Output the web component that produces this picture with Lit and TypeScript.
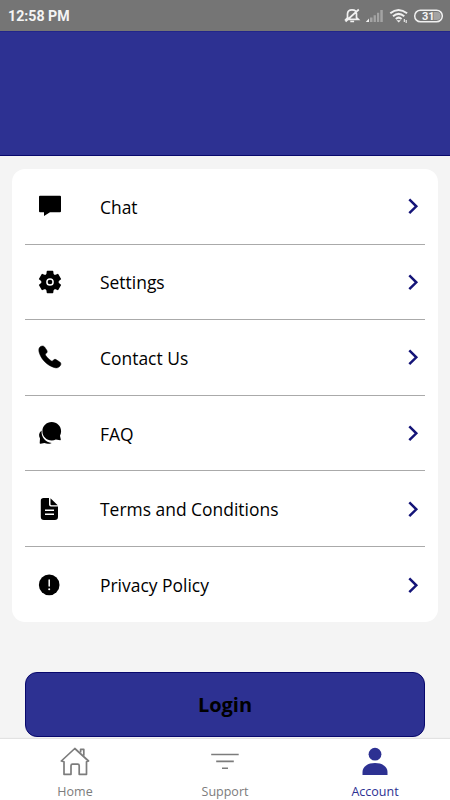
import { LitElement, html, css, svg } from "lit";
import { customElement } from "lit/decorators.js";

const gearTeeth = [0, 60, 120, 180, 240, 300];

const icons = {
  chat: svg`<path d="M2 1.700h20q1 0 1 1v14.500q0 1-1 1H12L6 22v-3.800H2q-1 0-1-1V2.700q0-1 1-1z"/>`,
  gear: svg`<circle cx="12" cy="12" r="8.700"/>
    ${gearTeeth.map((a) => svg`<path transform="rotate(${a} 12 12)" d="M8.700 1.500q0-.7.700-.7h5.200q.7 0 .7.700l.6 5H8.100z"/>`)}
    <circle cx="12" cy="12" r="3.100" fill="none" stroke="#fff" stroke-width="1.500"/>`,
  phone: svg`<path stroke="#000" stroke-width=".5" d="M2 1.900C3.500.8 5.500.6 6.600 2l2.200 3.200c.8 1.300.4 2.500-.8 3.400-.9.7-.8 1.100-.2 2 1.400 2.100 3 3.700 5.200 5.100.9.6 1.400.6 2-.2.900-1.200 2.200-1.500 3.400-.7l3.400 2.200c1.300.9 1.500 2.400.4 3.800-1.600 2.100-3.700 2.600-6.400 1.600C9 20 4 15.200 1.500 8.500.6 5.800.4 3.400 2 1.900z"/>`,
  bubbles: svg`<path d="M3.600 9.500C.8 11.600.4 14.500 2 17.600L1.700 22q0 .9.900.7l3.800-.6c2.700 1.100 5 1 7.300-.2C7.500 21.200 3 16.500 3.600 9.500z"/>
    <path d="M13.700 1C8.500 1 4.400 5 4.400 10.200s4.100 9.200 9.300 9.200c1.500 0 2.900-.3 4.100-.9l4.400.7q.7 0 .6-.8l-.8-3.700c.7-1.300 1.100-2.900 1.100-4.500C23.100 5 18.900 1 13.700 1z"/>`,
  doc: svg`<path d="M5.600 1H11v6.500q0 2 2 2h7v10.300q0 3.200-3.200 3.200H6q-3.200 0-3.200-3.200V3.800Q2.800 1 5.600 1z"/>
    <path d="M12.500 1.300 19.700 8.200H13.500q-1 0-1-1z"/>
    <path d="M7 13.300h9M7 17.200h9" stroke="#fff" stroke-width="1.400"/>`,
  alert: svg`<circle cx="11.200" cy="11.900" r="10.300"/>
    <path d="M11.200 6.900v6.200" stroke="#fff" stroke-width="1.500" stroke-linecap="round"/>
    <circle cx="11.200" cy="16.300" r="1" fill="#fff"/>`,
};

const items = [
  { icon: icons.chat, label: "Chat" },
  { icon: icons.gear, label: "Settings" },
  { icon: icons.phone, label: "Contact Us" },
  { icon: icons.bubbles, label: "FAQ" },
  { icon: icons.doc, label: "Terms and Conditions" },
  { icon: icons.alert, label: "Privacy Policy" },
];

@customElement("app-root")
export class AppRoot extends LitElement {
  static styles = css`
    :host {
      display: flex;
      flex-direction: column;
      width: 450px;
      height: 800px;
      overflow: hidden;
      background: #f4f4f4;
      font-family: "Open Sans", sans-serif;
      color: #000;
    }
    * { box-sizing: border-box; }
    svg { display: block; flex: none; }
    .status {
      flex: none;
      height: 31px;
      background: #757575;
      display: flex;
      align-items: center;
      justify-content: space-between;
      padding: 1px 7px 0 8px;
      color: #f4f4f4;
      font: 700 14.200px Roboto, sans-serif;
    }
    .header {
      flex: none;
      height: 125px;
      background: #2d3192;
      border-top: 1px solid #23268a;
      border-bottom: 1px solid #08086c;
    }
    .card {
      flex: none;
      margin: 13px 12.500px 0 12px;
      padding: 0 12.500px 0 13px;
      height: 453px;
      border-radius: 13px;
      background: #fff;
    }
    .row {
      height: 75.600px;
      display: flex;
      align-items: center;
      padding: 0 4.500px 0 12.500px;
      border-bottom: 1px solid #aaa;
    }
    .row:last-child { border-bottom: 0; height: 75.600px; }
    .label {
      flex: 1;
      margin-left: 38.500px;
      padding-top: 1px;
      font-size: 17.450px;
      line-height: 24px;
    }
    .login {
      flex: none;
      margin: 50px 25px 0;
      height: 65px;
      border: 1px solid #08086c;
      border-radius: 12px;
      background: #2d3192;
      display: flex;
      align-items: center;
      justify-content: center;
      font-size: 20px;
      font-weight: 700;
    }
    .nav {
      flex: none;
      height: 61px;
      margin-top: 2px;
      background: #fff;
      box-shadow: 0 -1px 1px #e2e2e2;
      display: grid;
      grid-template-columns: repeat(3, 1fr);
    }
    .tab {
      display: flex;
      flex-direction: column;
      align-items: center;
      padding-top: 7px;
      gap: 7px;
      font-size: 12.500px;
      line-height: 18px;
      color: #7c7c7c;
    }
    .active { color: #2d3192; }
  `;

  render() {
    return html`
      <div class="status">
        <span>12:58 PM</span>
        <svg width="100" height="20" viewBox="343 6 100 20" fill="none" stroke="#f0f0f0">
          <path d="M347.500 19.200V14c0-2.600 1.800-4.200 4.500-4.200s4.500 1.600 4.500 4.200v3.600l1.800 1.800H346l1.500-1.700M350.300 21.500h3.800M345.500 21.500 358.800 9.500" stroke-width="1.700"/>
          <g stroke="none" fill="#a3a3a3">
            <path d="M370 17.500h2.500V22H370zM373.600 15.200h2.300V22h-2.300zM377 12.800h2.200V22H377zM380.300 10h2.500v12h-2.500z"/>
            <path fill="#f0f0f0" d="M365.800 22l3.200-3.500V22z"/>
          </g>
          <path d="M390.300 13.300q8-6.700 16.800 0M393 16.200q5.500-4.600 11.300 0M395.800 18.900q2.900-2.500 5.800 0" stroke-width="2"/>
          <path d="M396.500 20.300h4.400l-2.200 2.200z" fill="#f0f0f0" stroke="none"/>
          <path d="M404.300 19v3M406.200 20v3" stroke-width="1.100"/>
          <rect x="414.700" y="10.200" width="27.600" height="11.600" rx="5.800" stroke-width="1.500"/>
          <path d="M433.500 12h3.200a4 4 0 0 1 0 8h-3.200z" fill="#a3a3a3" stroke="none"/>
          <text x="428.300" y="20" text-anchor="middle" font-family="Roboto" font-weight="700" font-size="11" fill="#f6f6f6" stroke="none">31</text>
        </svg>
      </div>
      <div class="header"></div>
      <div class="card">
        ${items.map(
          (item) => html`<div class="row">
            <svg width="24" height="24" viewBox="0 0 24 24">${item.icon}</svg>
            <span class="label">${item.label}</span>
            <svg width="16" height="20" viewBox="0 0 16 20" fill="none" stroke="#141478" stroke-width="2.500">
              <path d="M4.300 3.400 11.300 10.300 4.300 17.200"/>
            </svg>
          </div>`
        )}
      </div>
      <div class="login">Login</div>
      <div class="nav">
        <div class="tab">
          <svg width="30" height="30" viewBox="60 746 30 30" fill="none" stroke="#7c7c7c" stroke-width="1.700" stroke-linejoin="round">
            <path d="M61.300 761 74.800 748.500 88.500 761l-2 .7v12.600h-7.300v-8.600q0-1.500-1.500-1.500h-5.200q-1.500 0-1.500 1.500v8.600h-7v-12.600z"/>
            <path d="M80.600 752.500v-3.200h3.200v6.500"/>
          </svg>
          <span>Home</span>
        </div>
        <div class="tab">
          <svg width="30" height="30" viewBox="210 746 30 30" fill="none" stroke="#7c7c7c" stroke-width="1.600">
            <path d="M211.200 754.500h27.500M216.200 761.400h17.600M222 768.300h6"/>
          </svg>
          <span>Support</span>
        </div>
        <div class="tab active">
          <svg width="30" height="30" viewBox="360 746 30 30" fill="#2d3192">
            <circle cx="375" cy="754.200" r="6.400"/>
            <path d="M362.500 775v-3c0-5.500 5.600-8.900 12.500-8.900s12.500 3.400 12.500 8.900v3z"/>
          </svg>
          <span>Account</span>
        </div>
      </div>
    `;
  }
}
